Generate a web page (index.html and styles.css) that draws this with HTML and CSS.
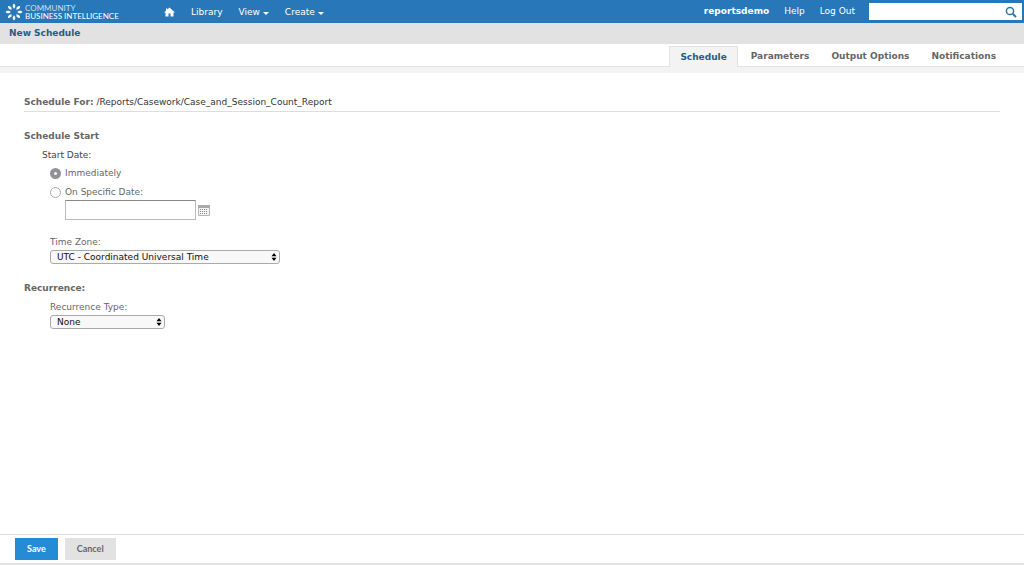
FILE: index.html
```html
<!DOCTYPE html>
<html lang="en">
<head>
<meta charset="utf-8">
<title>New Schedule</title>
<link rel="stylesheet" href="styles.css">
</head>
<body>
<header class="topbar">
  <a class="brand" href="#">
    <svg class="brand-mark" viewBox="0 0 18 18" aria-hidden="true">
      <g fill="#fff">
        <path id="ray" d="M9 5.800L7.800 4V2L9 .5l1.200 1.500v2z"/>
        <use href="#ray" transform="rotate(45 9 9)"/>
        <use href="#ray" transform="rotate(90 9 9)"/>
        <use href="#ray" transform="rotate(135 9 9)"/>
        <use href="#ray" transform="rotate(180 9 9)"/>
        <use href="#ray" transform="rotate(225 9 9)"/>
        <use href="#ray" transform="rotate(270 9 9)"/>
        <use href="#ray" transform="rotate(315 9 9)"/>
      </g>
    </svg>
    <span class="brand-text"><span class="brand-light">COMMUNITY</span><span>BUSINESS INTELLIGENCE</span></span>
  </a>
  <nav class="menu">
    <a href="#" aria-label="Home"><svg class="home" viewBox="0 0 11 10"><path fill="#fff" d="M5.500 0.500L11 5.500H9.500V9.500H6.500V6.500H4.500V9.500H1.500V5.500H0L2 3.700V1.500H3.300V2.500z"/></svg></a>
    <a href="#">Library</a>
    <a href="#">View<span class="caret"></span></a>
    <a href="#">Create<span class="caret"></span></a>
  </nav>
  <div class="account">
    <strong>reportsdemo</strong>
    <a href="#">Help</a>
    <a href="#">Log Out</a>
  </div>
  <form class="search">
    <input type="text" aria-label="Search">
    <button type="button" aria-label="Search"><svg viewBox="0 0 12 12"><circle cx="5" cy="5" r="3.600" fill="none" stroke="#2876a8" stroke-width="1.500"/><path d="M7.600 7.600L11 11" stroke="#2876a8" stroke-width="2"/></svg></button>
  </form>
</header>
<h1 class="title">New Schedule</h1>
<nav class="tabs">
  <a class="tab tab-active" href="#">Schedule</a>
  <a class="tab" href="#">Parameters</a>
  <a class="tab" href="#">Output Options</a>
  <a class="tab" href="#">Notifications</a>
</nav>
<main class="content">
  <p class="target"><strong>Schedule For:</strong> <span>/Reports/Casework/Case_and_Session_Count_Report</span></p>
  <h2>Schedule Start</h2>
  <fieldset class="start">
    <legend>Start Date:</legend>
    <label class="choice"><input type="radio" name="start" checked>Immediately</label>
    <label class="choice"><input type="radio" name="start">On Specific Date:</label>
    <div class="date">
      <input type="text" aria-label="Specific date">
      <button type="button" aria-label="Choose date"><svg viewBox="0 0 12 12"><path fill="#f4f4f4" stroke="#b5b5b5" d="M.5 1.500h11v10H.5z"/><path fill="#aaa" d="M0 1h12v3H0z"/><path stroke="#8c8c8c" stroke-dasharray="1 1" d="M2 5.500h8M2 7.500h8M2 9.500h8"/></svg></button>
    </div>
  </fieldset>
  <div class="field zone">
    <label for="zone">Time Zone:</label>
    <span class="select"><select id="zone"><option>UTC - Coordinated Universal Time</option></select>
    <svg viewBox="0 0 6 10"><path d="M3 1L5.500 4.300H.5zM3 9L.5 5.700h5z"/></svg></span>
  </div>
  <h2>Recurrence:</h2>
  <div class="field">
    <label for="type">Recurrence Type:</label>
    <span class="select select-short"><select id="type"><option>None</option></select>
    <svg viewBox="0 0 6 10"><path d="M3 1L5.500 4.300H.5zM3 9L.5 5.700h5z"/></svg></span>
  </div>
</main>
<footer class="actions">
  <button type="button" class="button primary">Save</button>
  <button type="button" class="button">Cancel</button>
</footer>
</body>
</html>
```
FILE: styles.css
```css
* { box-sizing: border-box; }
body {
  margin: 0;
  min-height: 100vh;
  display: flex;
  flex-direction: column;
  background: #fff;
  color: #666;
  font: 9px/12px Verdana, "DejaVu Sans", sans-serif;
}
a { color: inherit; text-decoration: none; }
button { border: 0; padding: 0; background: none; }
input, select, button { font: inherit; }
svg { display: block; }

.topbar {
  display: flex;
  height: 23px;
  background: #2777b9;
  color: #fff;
}
.brand { display: flex; align-items: center; gap: 2px; width: 164px; padding-left: 5px; }
.brand-mark { width: 18px; height: 18px; }
.brand-text { display: flex; flex-direction: column; padding-top: 1px; font: 8px/8px Lato, sans-serif; }
.brand-light { opacity: .75; }
.menu { display: flex; align-items: center; gap: 16px; }
.menu a { display: flex; align-items: center; }
.home { width: 11px; height: 10px; }
.caret { margin: 3px 0 0 3px; border: 3px solid transparent; border-top-color: #fff; border-bottom: 0; }
.account { display: flex; align-items: center; gap: 15px; margin-left: auto; padding-bottom: 2px; }
.search { display: flex; align-items: center; width: 153px; height: 17px; margin: 3px 2px 0 14px; background: #fff; }
.search input { flex: 1; min-width: 0; height: 17px; border: 0; padding: 0 4px; outline: 0; }
.search svg { width: 12px; height: 12px; }
.search button { margin-right: 5px; }

.title {
  height: 21px;
  margin: 0;
  padding-left: 9px;
  background: #e2e2e2;
  color: #255d82;
  font-size: 9px;
  line-height: 21px;
}
.tabs {
  display: flex;
  justify-content: flex-end;
  height: 29px;
  padding: 2px 17px 0 0;
  border-bottom: 6px solid #f3f3f3;
  box-shadow: inset 0 -1px #e2e2e2;
  font-weight: bold;
}
.tab { padding: 0 11px; line-height: 20px; }
.tab-active {
  margin-right: 2px;
  padding: 0 10px;
  border: 1px solid #e2e2e2;
  border-bottom: 0;
  background: #f3f3f3;
  color: #255d82;
}

.content { flex: 1; padding: 23px 24px 0; }
.target { margin: 0 0 18px; padding-bottom: 3px; border-bottom: 1px solid #ddd; }
.target span { color: #333; }
h2 { margin: 0; font-size: 9px; line-height: 12px; }
.start { margin: 7px 0 0; border: 0; padding: 0 0 0 26px; }
.start legend { margin-left: -8px; padding: 0; color: #444; }
.choice { display: flex; align-items: center; gap: 4px; height: 12px; margin-top: 6px; }
.choice + .choice { margin-top: 7px; }
.choice input {
  appearance: none;
  width: 11px;
  height: 11px;
  margin: 0;
  border: 1px solid #aaa;
  border-radius: 50%;
  background: #fff;
}
.choice input:checked { border: 4px solid #929296; }
.date { display: flex; align-items: center; gap: 2px; margin: 2px 0 0 15px; }
.date input { width: 131px; height: 20px; border: 1px solid #bbb; border-top-color: #888; padding: 0 4px; }
.date svg { width: 12px; height: 12px; }
.field { margin: 7px 0 0 26px; }
.field label { display: block; }
.zone { margin: 16px 0 18px 26px; }
.select { display: grid; align-items: center; width: 230px; margin-top: 2px; }
.select-short { width: 115px; }
.select select {
  appearance: none;
  grid-area: 1 / 1;
  width: 100%;
  height: 14px;
  border: 1px solid #aaa;
  border-radius: 3px;
  padding: 0 14px 0 6px;
  background: #f8f8f8;
  color: #111;
}
.select svg { grid-area: 1 / 1; justify-self: end; width: 6px; height: 10px; margin-right: 3px; pointer-events: none; }

.actions { display: flex; gap: 7px; padding: 3px 15px; border-top: 1px solid #ddd; border-bottom: 2px solid #e2e2e2; }
.button { height: 22px; padding: 0 12px; background: #e2e2e2; color: #666; font: bold 9px/22px Lato, sans-serif; }
.primary { background: #268bd5; color: #fff; }
```
